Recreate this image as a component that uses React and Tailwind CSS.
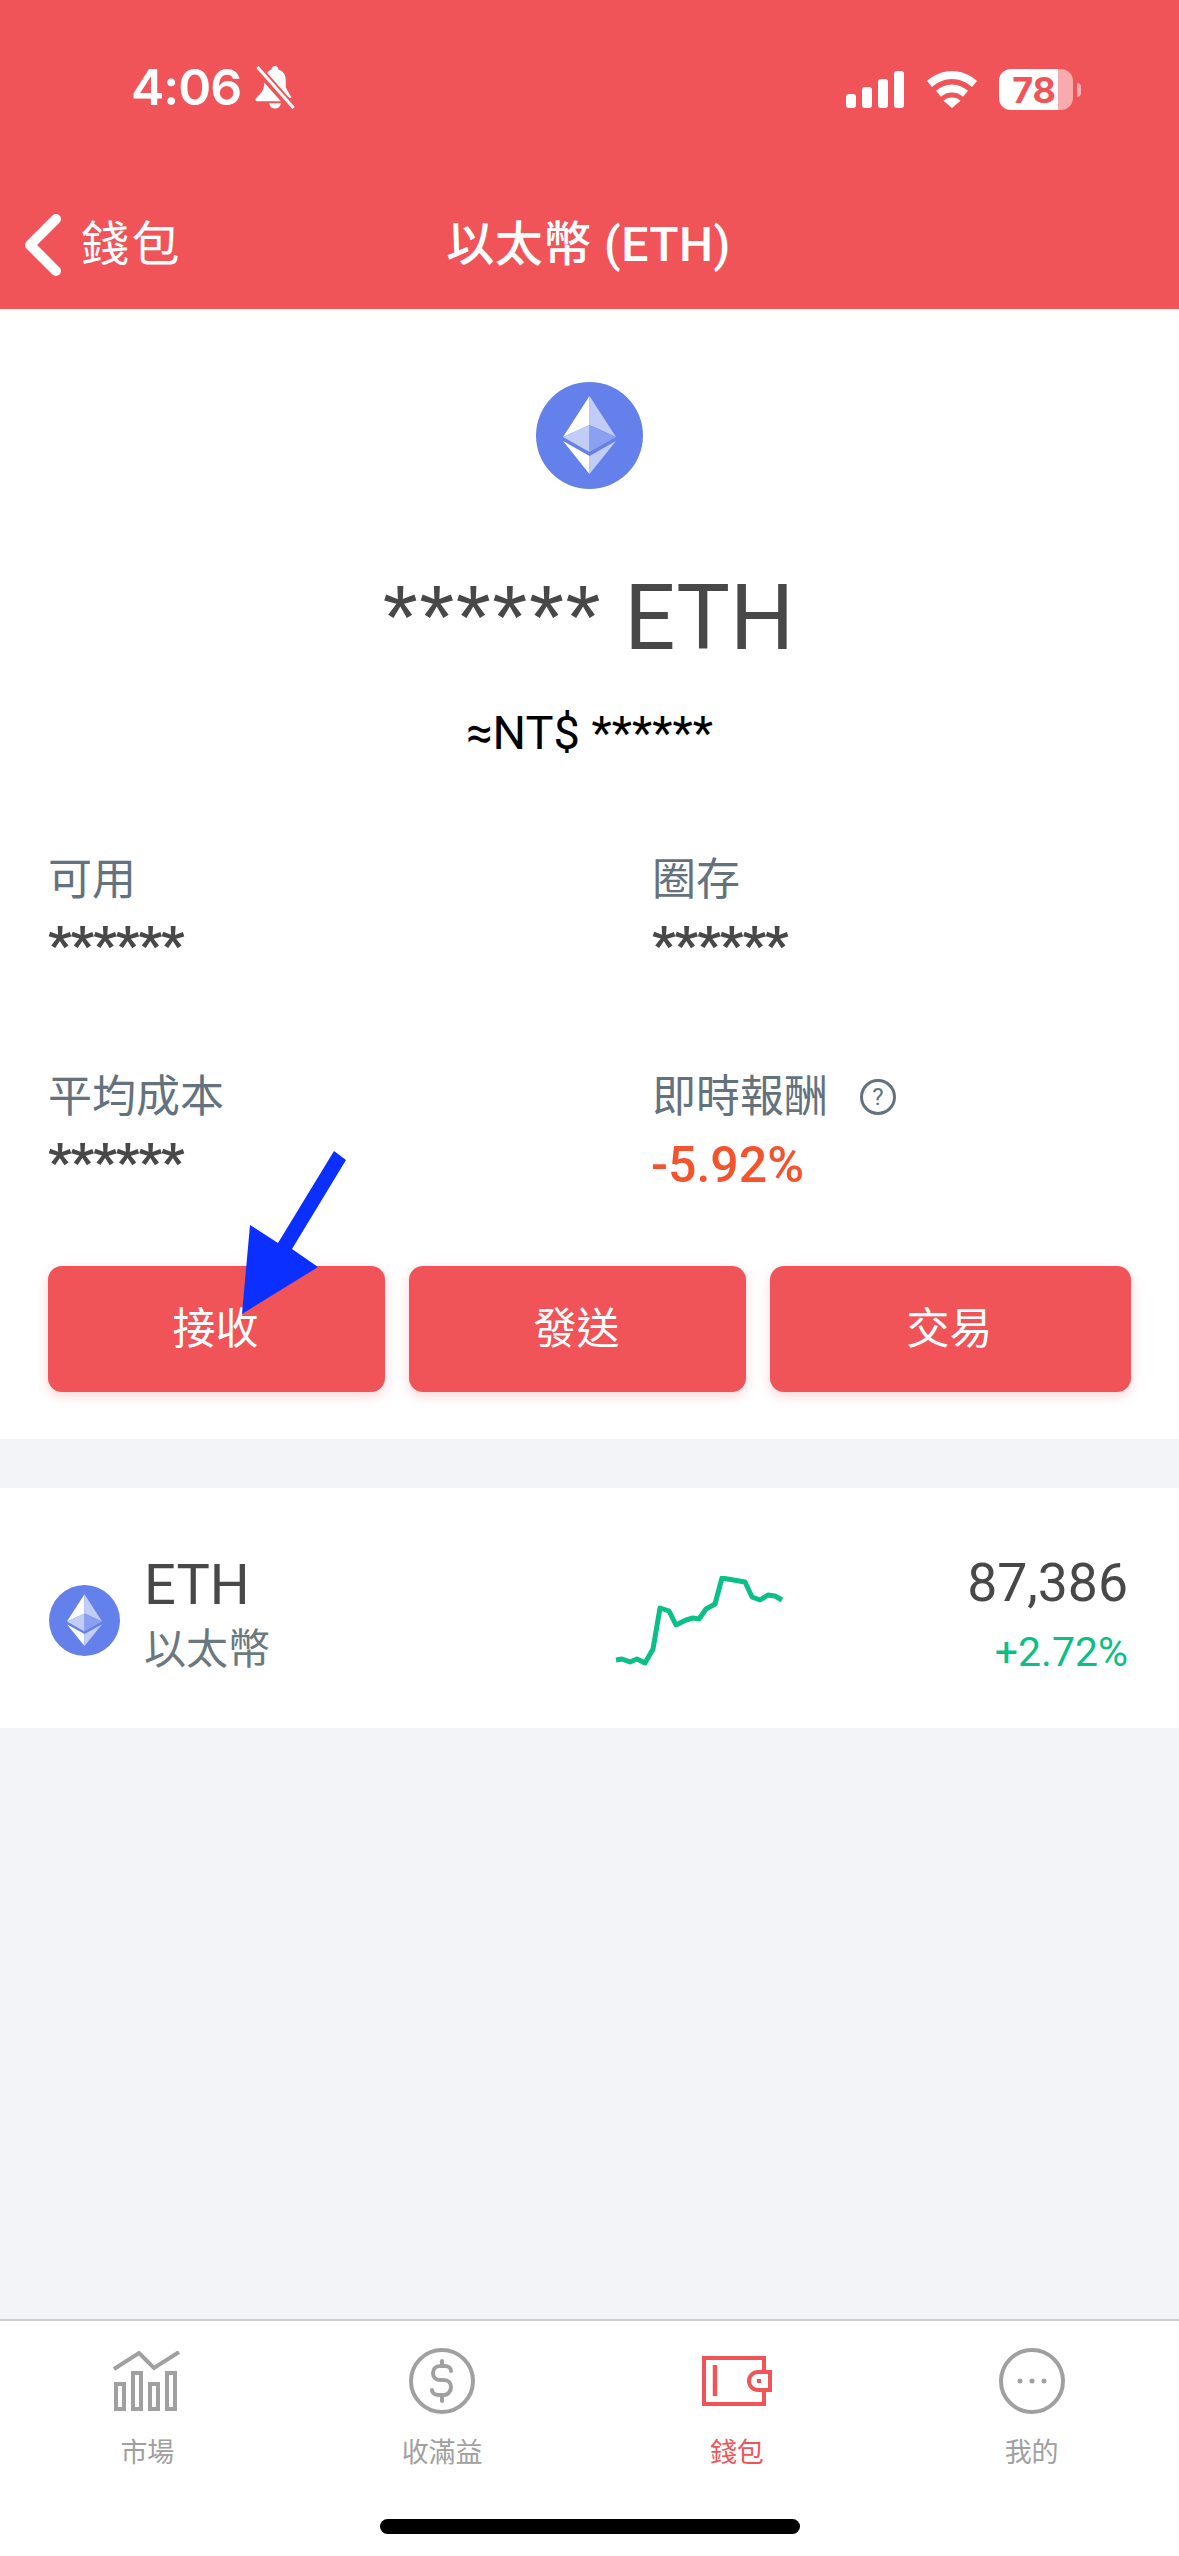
import React from "react";

const sans = "font-['Roboto','Noto_Sans_CJK_TC',sans-serif]";

function EthIcon({ className }) {
  return (
    <svg viewBox="0 0 107 107" className={className}>
      <circle cx="53.5" cy="53.5" r="53.5" fill="#6480ea" />
      <polygon points="53.5,14 53.5,43 27,55" fill="#ffffff" />
      <polygon points="53.5,14 53.5,43 80,55" fill="#c1cdf7" />
      <polygon points="27,55 53.5,43 53.5,70" fill="#c1cdf7" />
      <polygon points="80,55 53.5,43 53.5,70" fill="#8aa0f0" />
      <polygon points="27,59 53.5,74 53.5,92" fill="#ffffff" />
      <polygon points="80,59 53.5,74 53.5,92" fill="#c1cdf7" />
    </svg>
  );
}

function StatusBar() {
  return (
    <div className="flex h-[110px] items-end justify-between pl-[131px] pr-[98px]">
      <div className="flex items-center gap-[14px]">
        <span className="text-[50px] leading-[46px] font-semibold font-['Inter',sans-serif] tracking-[-1px]">4:06</span>
        <svg viewBox="0 0 40 44" className="w-[40px] h-[43px]" fill="#fff">
          <path d="M20 0c2 0 3.500 1.500 3.500 3.600 5 1.500 7.500 5.500 7.500 11v7.400l6 10.500-7 0L10.500 9.500C11.800 6.500 14 4.500 16.500 3.600 16.500 1.500 18 0 20 0z" />
          <path d="M9 17 26 36H1.500c-1.500 0-2-1.500-1-2.700C4 29 9 27 9 17z" />
          <path d="M14 38h12c-.5 3.500-3 5.500-6 5.500S14.500 41.500 14 38z" />
          <path d="M2 1 39 43" stroke="#f05459" strokeWidth="7" />
          <path d="M2 1 39 43" stroke="#fff" strokeWidth="3" />
        </svg>
      </div>
      <div className="flex items-center">
        <svg viewBox="0 0 58 37" className="w-[58px] h-[37px] mr-[23px]" fill="#fff">
          <rect x="0" y="23" width="10" height="14" rx="3" />
          <rect x="16" y="16" width="10" height="21" rx="3" />
          <rect x="32" y="8" width="10" height="29" rx="3" />
          <rect x="48" y="0" width="10" height="37" rx="3" />
        </svg>
        <svg viewBox="0 0 50 37" className="w-[50px] h-[37px] mr-[22px]" fill="#fff">
          <path d="M25 0C34.500 0 43 3.800 50 10l-5 6C39.500 11 32.500 8 25 8S10.500 11 5 16L0 10C7 3.800 15.500 0 25 0z" />
          <path d="M25 13.500c6 0 11.500 2.300 16 6.300l-5 6C33 23 29 21.500 25 21.500S17 23 14 25.800l-5-6c4.500-4 10-6.300 16-6.300z" />
          <path d="M25 26.500c3.500 0 6.500 1.200 8.500 3.300L25 37l-8.500-7.200c2-2.100 5-3.300 8.500-3.300z" />
        </svg>
        <div className="relative flex h-[41px] w-[74px] overflow-hidden rounded-[12px] bg-white/50">
          <div className="flex w-[59px] items-center justify-end bg-white pr-[2px]">
            <span className="text-[36px] leading-none font-bold font-['Inter',sans-serif] text-[#f05459]">78</span>
          </div>
        </div>
        <div className="ml-[4px] h-[14px] w-[4px] rounded-r-full bg-white/50" />
      </div>
    </div>
  );
}

function NavBar() {
  return (
    <div className="relative mt-[104px] flex h-[62px] items-center justify-center">
      <div className="absolute left-[24px] top-0 flex h-[62px] items-center">
        <svg viewBox="0 0 37 62" className="w-[37px] h-[62px]" fill="none">
          <path d="M32 5 6 31l26 26" stroke="#fff" strokeWidth="10" strokeLinecap="round" strokeLinejoin="round" />
        </svg>
        <span className="ml-[20px] text-[48px] leading-none tracking-[2.5px]">錢包</span>
      </div>
      <span className="text-[48px] leading-none font-medium tracking-[0.5px] mr-[2px]">以太幣 (ETH)</span>
    </div>
  );
}

function Stat({ label, value, help, valueClass }) {
  return (
    <div className="h-[118px]">
      <div className="flex h-[50px] items-center text-[44px] leading-none text-[#63727c]">
        {label}
        {help && (
          <span className="ml-[32px] flex h-[36px] w-[36px] items-center justify-center rounded-full border-[3px] border-[#63727c] text-[24px] leading-none">
            ?
          </span>
        )}
      </div>
      <div className={valueClass || "mt-[11px] text-[52px] leading-[60px] font-bold tracking-[-1px] text-[#484848]"}>{value}</div>
    </div>
  );
}

function Sparkline() {
  return (
    <svg viewBox="0 0 170 100" className="mt-[36px] w-[170px] h-[100px]" fill="none">
      <path
        d="M2 84 8 83 16 86 23 83 31 87 39 73 46 32 55 35 62 49 72 44 79 42 85 43 92 33 101 28 108 2 131 6 138 21 146 24 154 19 161 20 168 24"
        stroke="#0abf88"
        strokeWidth="5"
        strokeLinejoin="round"
      />
    </svg>
  );
}

function MarketIcon() {
  return (
    <svg viewBox="0 0 68 60" className="w-[68px] h-[60px]" fill="none" stroke="#a0a0a0" strokeWidth="4">
      <path d="M1 18 26 2l15 15L66 1" />
      <rect x="3" y="33" width="8" height="25" />
      <rect x="20" y="22" width="8" height="36" />
      <rect x="37" y="33" width="8" height="25" />
      <rect x="54" y="22" width="8" height="36" />
    </svg>
  );
}

function DollarIcon() {
  return (
    <svg viewBox="0 0 66 66" className="w-[66px] h-[66px]" fill="none" stroke="#a0a0a0" strokeWidth="4">
      <circle cx="33" cy="33" r="31" />
      <path d="M42 23c0-3-3-5-6-5h-5c-4 0-7 3-7 7s3 7 7 7h4c4 0 7 3 7 7s-3 8-7 8h-5c-4 0-7-2-7-5M33 13v5M33 47v6" strokeLinecap="round" />
    </svg>
  );
}

function WalletIcon() {
  return (
    <svg viewBox="0 0 70 52" className="w-[70px] h-[52px]" fill="none" stroke="#f05459">
      <path d="M62 15V3H2v46h60V37" strokeWidth="4" />
      <path d="M13 10v31" strokeWidth="4.500" />
      <path d="M68 17H56a9 9 0 0 0 0 18h12z" strokeWidth="4" />
      <rect x="55" y="24" width="4" height="4" fill="#f05459" stroke="none" />
    </svg>
  );
}

function MoreIcon() {
  return (
    <svg viewBox="0 0 66 66" className="w-[66px] h-[66px]" fill="none" stroke="#a0a0a0" strokeWidth="4">
      <circle cx="33" cy="33" r="31" />
      <circle cx="21" cy="33" r="2.500" fill="#a0a0a0" stroke="none" />
      <circle cx="33" cy="33" r="2.500" fill="#a0a0a0" stroke="none" />
      <circle cx="45" cy="33" r="2.500" fill="#a0a0a0" stroke="none" />
    </svg>
  );
}

function Tab({ icon, label, active }) {
  return (
    <div className="flex w-1/4 flex-col items-center">
      <div className="flex h-[72px] items-center">{icon}</div>
      <span className={"mt-[20px] text-[27px] leading-[32px] " + (active ? "text-[#f05459]" : "text-[#a0a0a0]")}>{label}</span>
    </div>
  );
}

export default function App() {
  return (
    <div className={"relative flex h-[2556px] w-[1179px] flex-col overflow-hidden bg-[#f3f4f8] " + sans}>
      <div className="h-[309px] shrink-0 bg-[#f05459] text-white">
        <StatusBar />
        <NavBar />
      </div>

      <div className="h-[1130px] shrink-0 bg-white pt-[73px]">
        <EthIcon className="mx-auto h-[107px] w-[107px]" />
        <div className="mt-[79px] pr-[2px] text-center text-[90px] leading-[100px] text-[#484848]">
          <span className="font-['Liberation_Sans',sans-serif] tracking-[1.5px]">******</span> ETH
        </div>
        <div className="mt-[34px] text-center text-[47px] leading-[60px] text-black">≈NT$ ******</div>

        <div className="mt-[92px] grid grid-cols-[604px_1fr] gap-y-[99px] pl-[48px]">
          <Stat label="可用" value="******" />
          <Stat label="圈存" value="******" />
          <Stat label="平均成本" value="******" />
          <Stat
            label="即時報酬"
            value="-5.92%"
            help
            valueClass="mt-[13px] -ml-[1px] text-[50px] leading-[60px] font-medium text-[#f4532e]"
          />
        </div>

        <div className="mt-[76px] flex gap-[24px] px-[48px]">
          <button className="h-[126px] w-[337px] rounded-[14px] bg-[#f05459] pr-[2px] text-[43px] text-white shadow-[0_4px_12px_rgba(240,84,90,0.25)]">接收</button>
          <button className="h-[126px] w-[337px] rounded-[14px] bg-[#f05459] pr-[2px] text-[43px] text-white shadow-[0_4px_12px_rgba(240,84,90,0.25)]">發送</button>
          <button className="h-[126px] w-[361px] rounded-[14px] bg-[#f05459] pr-[2px] text-[43px] text-white shadow-[0_4px_12px_rgba(240,84,90,0.25)]">交易</button>
        </div>
      </div>

      <div className="mt-[49px] flex h-[240px] shrink-0 items-center bg-white pl-[49px] pr-[51px]">
        <EthIcon className="mt-[24px] h-[71px] w-[71px]" />
        <div className="ml-[24px] mt-[12px] w-[470px]">
          <div className="text-[56px] leading-[64px] text-[#484848]">ETH</div>
          <div className="mt-[8px] text-[42px] leading-[50px] text-[#6b7880]">以太幣</div>
        </div>
        <Sparkline />
        <div className="mt-[12px] flex-1 text-right">
          <div className="text-[53.5px] leading-[64px] text-[#484848]">87,386</div>
          <div className="mt-[12px] text-[41px] leading-[50px] text-[#0abf88]">+2.72%</div>
        </div>
      </div>

      <div className="mt-auto h-[237px] shrink-0 border-t-2 border-[#cccccc] bg-white">
        <div className="flex pt-[24px]">
          <Tab icon={<MarketIcon />} label="市場" />
          <Tab icon={<DollarIcon />} label="收滿益" />
          <Tab icon={<WalletIcon />} label="錢包" active />
          <Tab icon={<MoreIcon />} label="我的" />
        </div>
        <div className="mx-auto mt-[50px] h-[15px] w-[420px] rounded-full bg-black" />
      </div>

      {/* annotation arrow drawn over the page */}
      <svg viewBox="0 0 120 170" className="absolute left-[238px] top-[1148px] h-[170px] w-[120px]">
        <polygon points="96,3 108,12 54,101 80,119 4,166 12,77 40,95" fill="#0a2fff" />
      </svg>
    </div>
  );
}
